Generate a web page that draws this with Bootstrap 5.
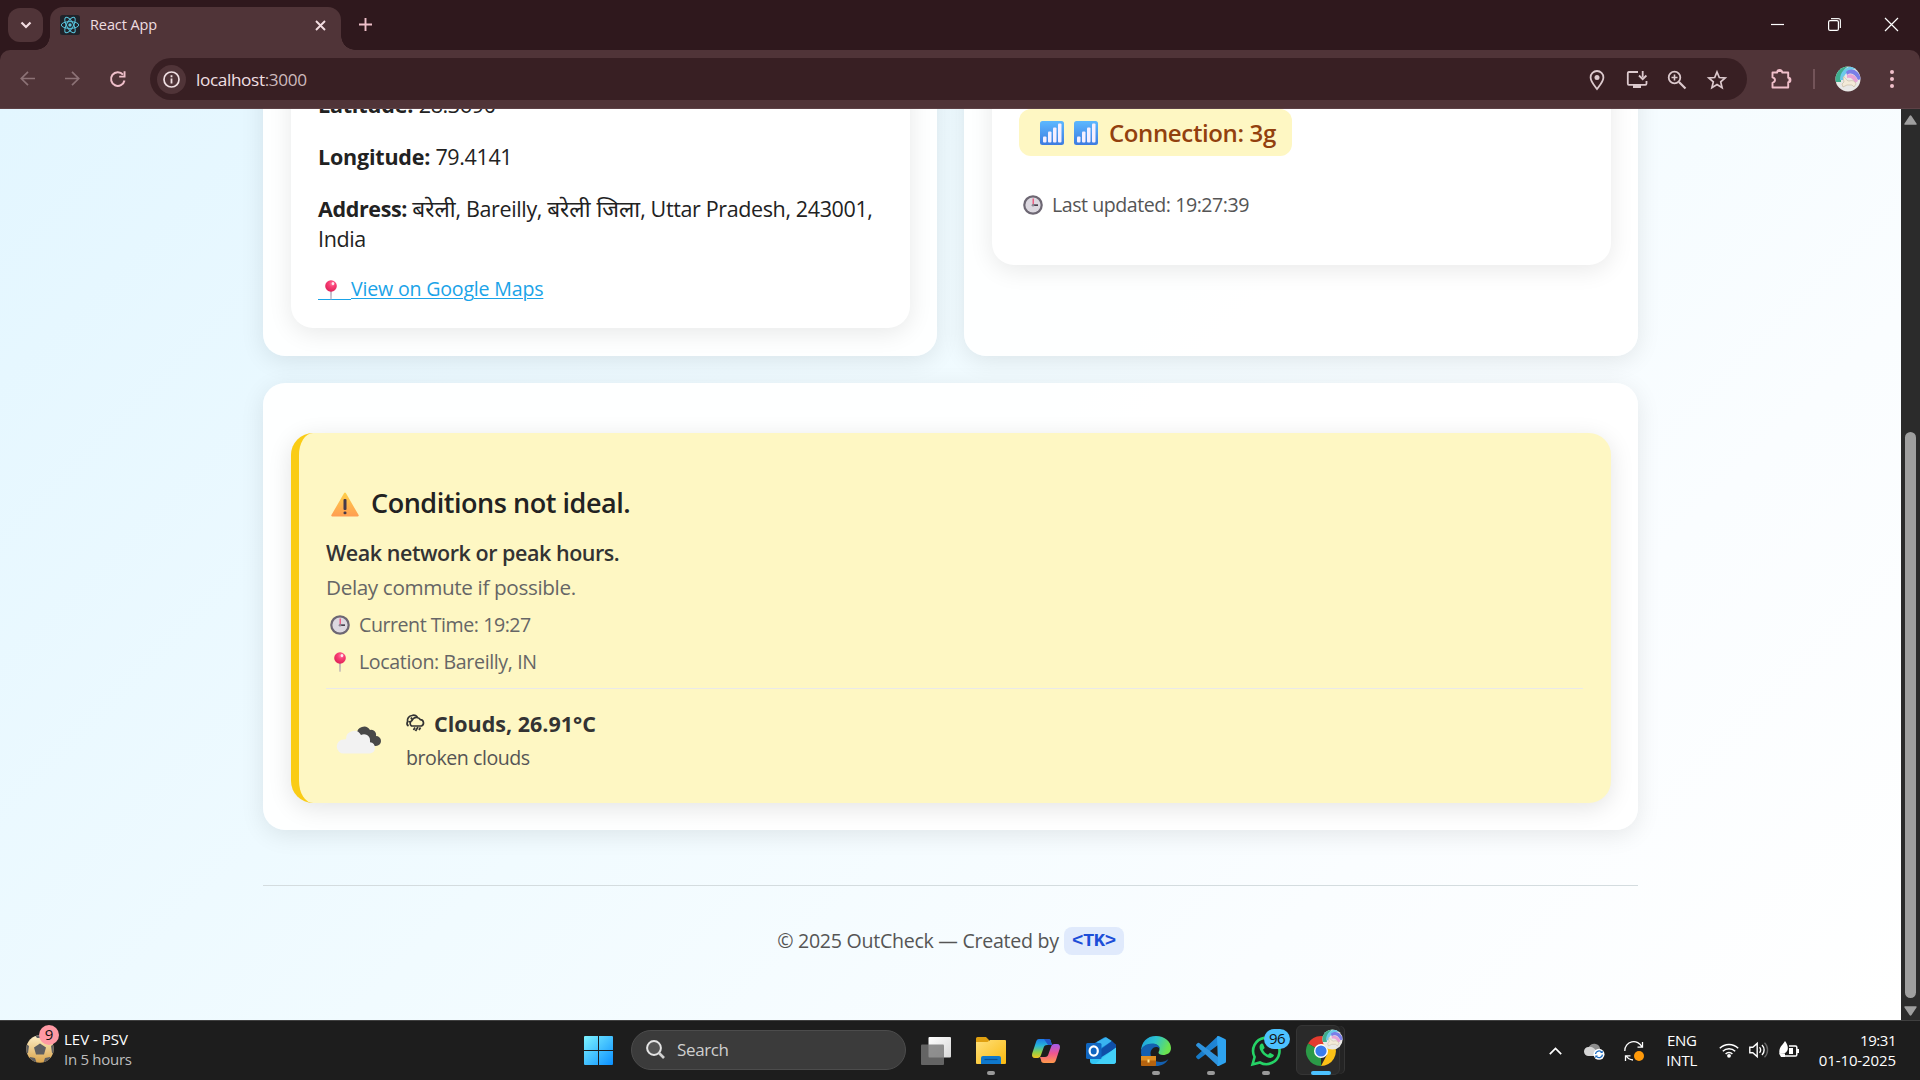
<!DOCTYPE html>
<html lang="en">
<head>
<meta charset="utf-8">
<title>React App</title>
<link href="https://cdn.jsdelivr.net/npm/bootstrap@5.3.0/dist/css/bootstrap.min.css" rel="stylesheet">
<style>
body{width:1920px;height:1080px;overflow:hidden;font-family:"Open Sans","Noto Sans",sans-serif;color:#222;background:#1d1d1d}
svg{display:block;flex:none;overflow:visible}
.t{white-space:nowrap}
.s1{letter-spacing:-.1px}.s2{letter-spacing:-.2px}.s3{letter-spacing:-.28px}.s4{letter-spacing:-.37px}.s5{letter-spacing:-.46px}
.hi{font-size:22.6px;letter-spacing:0;line-height:1}
.tabstrip{height:50px;background:#2f181d}
.tab-menu{width:35px;height:34px;margin:8px 0 0 8px;border-radius:12px;background:#503438}
.tab-item{width:291px;height:43px;margin:7px 0 0 7px;padding:0 15px 7px 10px;border-radius:13px 13px 0 0;background:#503438;color:#eedde0;font-size:14.5px}
.tab-item::before,.tab-item::after{content:"";position:absolute;bottom:0;width:14px;height:14px}
.tab-item::before{left:-14px;background:radial-gradient(circle at 0 0,transparent 13.5px,#503438 14px)}
.tab-item::after{right:-14px;background:radial-gradient(circle at 100% 0,transparent 13.5px,#503438 14px)}
.toolbar{height:59px;background:#503438;border-bottom:1px solid #5d4146;border-radius:10px 10px 0 0}
.top-shell{background:#2f181d}
.omnibox{width:1597px;height:42px;border-radius:21px;background:#381f23;color:#f0dfe2;font-size:17.2px;padding-left:7px;padding-right:20px}
.info-dot{width:29px;height:29px;border-radius:50%;background:#503438}
.viewport{height:911px}
.page{width:1901px;overflow:hidden;background:linear-gradient(135deg,#e3f6ff 0%,#f1fbff 45%,#fafdff 75%,#fff 100%)}
.sheet{width:1375px;margin:-68px auto 0}
.panel{background:rgba(255,255,255,.93);border-radius:22px;box-shadow:0 5px 25px rgba(0,0,0,.09)}
.panel-top{width:674px;height:315px;padding:28px 27px 28px 28px}
.inner{background:#fff;border-radius:22px;box-shadow:0 5px 25px rgba(0,0,0,.09)}
.inner-loc{height:259px;padding:21px 27px 25px}
.inner-net{height:196px;padding:40px 27px}
.l22{font-size:21.5px;line-height:30px}
.l20{font-size:19.6px;line-height:28px}
.maps,.maps:hover{color:#1aa3e8;text-decoration:none}
.maps .t{text-decoration:underline;text-decoration-thickness:1px;text-underline-offset:2px}
.pin-cell{width:33px;height:28px;padding:5px 0 0 3px;background:linear-gradient(#1aa3e8,#1aa3e8) 0 24px/100% 1px no-repeat}
.conn{width:273px;height:47px;border-radius:12px;background:#fef7c3;color:#92400e;font-size:24px;font-weight:600;padding-left:21px}
.grey5{color:#555}.grey6{color:#666}
.panel-wide{margin-top:27px;height:447px;padding:50px 27px 27px 28px}
.advice{height:370px;background:#fef7c3;border-left:8px solid #facc15;border-radius:22px;box-shadow:0 5px 25px rgba(0,0,0,.11);padding:51px 28px 0 27px}
.adv-title{font-size:27px;line-height:38px;font-weight:600}
.adv-line{height:1px;background:#eaeaea;margin-top:12px}
.foot{margin-top:55px;border-top:1px solid #d4dcdf;padding-top:41px}
.tk{width:60px;height:28px;border-radius:8px;background:#e0eafc;color:#1d4ed8;font:700 19px/29px "Liberation Mono",monospace;letter-spacing:-.5px}
.scroll{width:19px;background:#2b2b2b}
.thumb{width:11px;height:566px;border-radius:6px;background:#9f9f9f}
.taskbar{height:60px;background:#1d1d1d;border-top:1px solid #404040;color:#fff;font-size:15px}
.tl{line-height:20px;padding-bottom:2px}
.slot{width:55px;height:59px}
.slot.run::after{content:"";position:absolute;left:23.5px;bottom:5px;width:8px;height:4px;border-radius:2px;background:#9a9a9a}
.slot.on::after{content:"";position:absolute;left:18px;bottom:5px;width:20px;height:4px;border-radius:2px;background:#4cc2ff}
.plate{position:absolute;left:3px;top:4px;width:44px;height:50px;border-radius:6px;background:#2a2a2a;border:1px solid #353535;box-shadow:5px 0 0 -1px #242424,6px 0 0 -1px #353535}
.searchbox{width:275px;height:40px;border-radius:20px;background:#3b3b3b;border:1px solid #4c4c4c;color:#cfcfcf;font-size:17px;padding-left:14px}
.count{position:absolute;border-radius:10px;color:#111;text-align:center;height:20px;line-height:19px;font-size:15px}
.c9{left:39px;top:-4px;width:20px;background:#ff99a4}
.c96{left:26px;top:8px;width:26px;background:#4cc2ff;letter-spacing:-.6px}
.face{position:absolute;left:29px;top:8px}
</style>
</head>
<body>
<svg width="0" height="0" class="position-absolute">
<defs>
<radialGradient id="gPin" cx=".6" cy=".3" r=".8"><stop offset="0" stop-color="#ff7fa6"/><stop offset=".35" stop-color="#f93f75"/><stop offset="1" stop-color="#d81b52"/></radialGradient>
<linearGradient id="gSig" x1="0" y1="0" x2="0" y2="1"><stop offset="0" stop-color="#5cb8ff"/><stop offset="1" stop-color="#3d7be0"/></linearGradient>
<linearGradient id="gWarn" x1="0" y1="0" x2="0" y2="1"><stop offset="0" stop-color="#ffcf4a"/><stop offset="1" stop-color="#ff9d52"/></linearGradient>
<linearGradient id="gWin" gradientUnits="userSpaceOnUse" x1="0" y1="0" x2="29" y2="29"><stop offset="0" stop-color="#7df3ff"/><stop offset="1" stop-color="#0a8fff"/></linearGradient>
<linearGradient id="gFold" x1="0" y1="0" x2="1" y2="1"><stop offset="0" stop-color="#ffe07a"/><stop offset="1" stop-color="#f9b90f"/></linearGradient>
<linearGradient id="gCa" x1="0" y1="0" x2="0" y2="1"><stop offset="0" stop-color="#1c7be8"/><stop offset=".35" stop-color="#27b5d8"/><stop offset=".7" stop-color="#8fd04a"/><stop offset="1" stop-color="#f2c320"/></linearGradient>
<linearGradient id="gCb" x1="0" y1="0" x2="0" y2="1"><stop offset="0" stop-color="#a05bf0"/><stop offset=".5" stop-color="#f0568f"/><stop offset="1" stop-color="#ff9a4a"/></linearGradient>
<linearGradient id="gEd" x1="0" y1="0" x2="1" y2=".3"><stop offset="0" stop-color="#1c9de0"/><stop offset=".5" stop-color="#2cc3d0"/><stop offset="1" stop-color="#6be34e"/></linearGradient>
<linearGradient id="gVs" x1="0" y1="0" x2="1" y2="0"><stop offset="0" stop-color="#1478c4"/><stop offset="1" stop-color="#2187d8"/></linearGradient>
<linearGradient id="gBall" x1="0" y1="0" x2="0" y2="1"><stop offset="0" stop-color="#fff0c8"/><stop offset="1" stop-color="#d8a24a"/></linearGradient>
<linearGradient id="gTv" x1="0" y1="0" x2="1" y2="1"><stop offset="0" stop-color="#fff"/><stop offset="1" stop-color="#d8d8d8"/></linearGradient>
<symbol id="pin" viewBox="0 0 20 20"><path d="M9.300 10h1.400l-.2 9.700h-1z" fill="#a89bb0"/><circle cx="10" cy="6" r="5.800" fill="url(#gPin)"/><ellipse cx="12" cy="3.600" rx="1.300" ry="1.600" fill="#fff" opacity=".85"/></symbol>
<symbol id="clock" viewBox="0 0 20 20"><circle cx="10" cy="10" r="9.800" fill="#6d6773"/><circle cx="10" cy="10" r="7.600" fill="#dcd8e0"/><path d="M9.600 3.500h1.200V10H9.600z" fill="#f0436f"/><path d="M10 9.400h5v1.500h-5z" fill="#38303f"/><circle cx="10" cy="10.200" r="1.300" fill="#8d8794"/></symbol>
<symbol id="signal" viewBox="0 0 24 24"><rect width="24" height="24" rx="2.500" fill="url(#gSig)"/><rect x="3" y="15.500" width="3.500" height="6" rx="1" fill="#f5efff"/><rect x="8" y="10.500" width="3.500" height="11" rx="1" fill="#f5efff"/><rect x="13" y="6.500" width="3.500" height="15" rx="1" fill="#f5efff"/><rect x="18" y="2.500" width="3.500" height="19" rx="1" fill="#f5efff"/></symbol>
<symbol id="face" viewBox="0 0 26 26"><clipPath id="cf"><circle cx="13" cy="13" r="12.500"/></clipPath><g clip-path="url(#cf)"><rect width="26" height="26" fill="#e9e8e6"/><path d="M0 16V0h14C8 3 6 9 6 16z" fill="#3fae8e"/><path d="M5 14C5 6 10 1 18 0l3 3C13 4 9 8 8 14z" fill="#6cc9ea"/><path d="M11 6C16 1 24 4 26 13l-3 1C20 8 16 6 12 9z" fill="#7a7fe8"/><path d="M12 9c5-2 9 1 11 6l-3 2c-2-4-4-6-8-5z" fill="#e7a3d6"/><path d="M8 11c2-1 3 4 6 4 4-1 6 0 7 3l-2 3-2-2-5 0-4 2-1-3 2-2z" fill="#f3ead8" stroke="#c5b59e" stroke-width=".6"/></g></symbol>
</defs>
</svg>

<header class="top-shell">
  <div class="tabstrip d-flex">
    <div class="tab-menu d-flex align-items-center justify-content-center"><svg width="12" height="8" viewBox="0 0 12 8"><path d="M1.500 1.500 6 6l4.500-4.500" fill="none" stroke="#f3dde1" stroke-width="2.200"/></svg></div>
    <div class="tab-item d-flex align-items-center position-relative">
      <svg width="20" height="20" viewBox="0 0 20 20" style="margin-right:10px"><rect width="20" height="20" rx="2.500" fill="#20232a"/><g fill="none" stroke="#58c4dc" stroke-width="1"><ellipse cx="10" cy="10" rx="8.700" ry="3.400"/><ellipse cx="10" cy="10" rx="8.700" ry="3.400" transform="rotate(60 10 10)"/><ellipse cx="10" cy="10" rx="8.700" ry="3.400" transform="rotate(120 10 10)"/></g><circle cx="10" cy="10" r="1.700" fill="#58c4dc"/></svg>
      <span class="t s1 me-auto">React App</span>
      <svg width="11" height="11" viewBox="0 0 11 11"><path d="m1 1 9 9M10 1l-9 9" stroke="#f3dde1" stroke-width="1.900"/></svg>
    </div>
    <svg width="13" height="13" viewBox="0 0 13 13" style="margin:18px 0 0 18px"><path d="M6.500 0v13M0 6.500h13" stroke="#efc0ca" stroke-width="1.900"/></svg>
    <div class="ms-auto d-flex" style="padding:18px 22px 0 0;gap:44px">
      <svg width="13" height="13" viewBox="0 0 13 13"><path d="M0 6.500h13" stroke="#fff" stroke-width="1.200"/></svg>
      <svg width="13" height="13" viewBox="0 0 13 13"><path d="M3 .6h7.400a2 2 0 0 1 2 2V10" fill="none" stroke="#eee" stroke-width="1.200"/><rect x=".6" y="2.600" width="9.800" height="9.800" rx="1.500" fill="none" stroke="#fff" stroke-width="1.200"/></svg>
      <svg width="13" height="13" viewBox="0 0 13 13"><path d="m0 0 13 13M13 0 0 13" stroke="#fff" stroke-width="1.200"/></svg>
    </div>
  </div>
  <div class="toolbar d-flex align-items-center">
    <div class="d-flex" style="width:150px;padding-left:20px;gap:30px">
      <svg width="15" height="15" viewBox="0 0 15 15"><path d="M15 7.500H1.500M8 .8 1.300 7.500 8 14.200" fill="none" stroke="#8c7276" stroke-width="1.700"/></svg>
      <svg width="15" height="15" viewBox="0 0 15 15"><path d="M0 7.500h13.500M7 .8l6.700 6.700L7 14.200" fill="none" stroke="#8c7276" stroke-width="1.700"/></svg>
      <svg width="16" height="16" viewBox="0 0 16 16"><path d="M14.500 9.500A6.800 6.800 0 1 1 13 3.600" fill="none" stroke="#f0bfca" stroke-width="2"/><path d="M15.500.3v6.200H9.200V4.700h4.400V.3z" fill="#f0bfca"/></svg>
    </div>
    <div class="omnibox d-flex align-items-center">
      <div class="info-dot d-flex align-items-center justify-content-center"><svg width="17" height="17" viewBox="0 0 17 17"><circle cx="8.500" cy="8.500" r="7.500" fill="none" stroke="#f0dfe2" stroke-width="1.700"/><path d="M8.500 7.500v5M8.500 4.300v1.900" stroke="#f0dfe2" stroke-width="1.800"/></svg></div>
      <span class="t s4" style="margin-left:10px;padding-top:1px">localhost<span style="color:#cdb9bc">:3000</span></span>
      <div class="ms-auto d-flex align-items-center" style="gap:20px;color:#dcc9cd;padding-top:2px">
        <svg width="20" height="20" viewBox="0 0 20 20"><path d="M10 1a6.400 6.400 0 0 0-6.400 6.500C3.600 11.500 7 15 10 19c3-4 6.400-7.500 6.400-11.500A6.400 6.400 0 0 0 10 1z" fill="none" stroke="currentColor" stroke-width="1.800"/><circle cx="10" cy="7.500" r="2.500" fill="currentColor"/></svg>
        <svg width="20" height="20" viewBox="0 0 20 20"><path d="M11 2H1.800A1.200 1.200 0 0 0 .8 3.300v10.200c0 .8.300 1.300 1 1.300h16.600c.8 0 1.100-.5 1.100-1.300V11" fill="none" stroke="currentColor" stroke-width="1.800"/><path d="M6 15h8v3H6zM14.800 1h1.800v6.500h-1.800z" fill="currentColor"/><path d="m12 5.500 3.700 3.700 3.700-3.700" fill="none" stroke="currentColor" stroke-width="1.800"/></svg>
        <svg width="20" height="20" viewBox="0 0 20 20"><circle cx="7.500" cy="7.500" r="5.800" fill="none" stroke="currentColor" stroke-width="1.800"/><path d="m12 12 6.500 6.500" stroke="currentColor" stroke-width="2.200"/><path d="M7.500 4.500v6M4.500 7.500h6" stroke="currentColor" stroke-width="1.600"/></svg>
        <svg width="20" height="20" viewBox="0 0 20 20"><path d="m10 2 2.300 5.500 5.900.5-4.500 3.900 1.400 5.800-5.100-3.100-5.100 3.100 1.400-5.800L1.800 8l5.900-.5z" fill="none" stroke="currentColor" stroke-width="1.700"/></svg>
      </div>
    </div>
    <svg width="22" height="22" viewBox="0 0 22 22" style="margin-left:23px"><path d="M2.500 4.500h4.700a2.500 2.500 0 0 1 5 0h6v5.200a2.200 2.200 0 0 1 0 4.500v5.300H2.500v-4.700c3.300-.9 3.300-4.500 0-5.400z" fill="none" stroke="#f0bfca" stroke-width="1.900" stroke-linejoin="round"/><path d="M7.400 4a2.300 2.300 0 0 1 4.600 0zM18.500 9.700a2.200 2.200 0 0 1 0 4.500z" fill="#f0bfca"/></svg>
    <div style="width:2px;height:20px;background:#735459;margin-left:21px"></div>
    <svg width="26" height="26" style="margin-left:20px"><use href="#face"/></svg>
    <svg width="4" height="20" viewBox="0 0 4 20" style="margin-left:29px"><g fill="#f0bfca"><circle cx="2" cy="3" r="2"/><circle cx="2" cy="10" r="2"/><circle cx="2" cy="17" r="2"/></g></svg>
  </div>
</header>

<div class="viewport d-flex">
<main class="page">
  <div class="sheet">
    <div class="d-flex justify-content-between">
      <section class="panel panel-top">
        <div class="inner inner-loc">
          <p class="l22 t" style="margin-bottom:22px"><strong class="s2">Latitude:</strong> <span class="s4">28.3690</span></p>
          <p class="l22 t" style="margin-bottom:22px"><strong class="s2">Longitude:</strong><span class="s4"> 79.4141</span></p>
          <p class="l22 t s4" style="margin-bottom:21px"><strong>Address:</strong> <span class="hi">बरेली</span>, Bareilly, <span class="hi">बरेली जिला</span>, Uttar Pradesh, 243001,<br>India</p>
          <a class="maps l20 d-flex align-items-center" href="#"><span class="pin-cell"><svg width="20" height="20"><use href="#pin"/></svg></span><span class="t s2">View on Google Maps</span></a>
        </div>
      </section>
      <section class="panel panel-top">
        <div class="inner inner-net">
          <div class="conn d-flex align-items-center"><svg width="24" height="24"><use href="#signal"/></svg><svg width="24" height="24" style="margin:0 11px 0 10px"><use href="#signal"/></svg><span class="t s4">Connection: 3g</span></div>
          <div class="l20 grey5 d-flex align-items-center" style="margin-top:35px;padding-left:4px"><svg width="20" height="20" style="margin-right:9px"><use href="#clock"/></svg><span class="t s5">Last updated: 19:27:39</span></div>
        </div>
      </section>
    </div>
    <section class="panel panel-wide">
      <div class="advice">
        <div class="adv-title d-flex align-items-center"><svg width="28" height="25" viewBox="0 0 28 25" style="margin:3px 12px 0 5px"><path d="M13 1.300a1.200 1.200 0 0 1 2 0l12.600 21.800a1 1 0 0 1-.9 1.500H1.300a1 1 0 0 1-.9-1.500z" fill="url(#gWarn)"/><rect x="12.500" y="7" width="3" height="11" rx="1" fill="#45394a"/><rect x="12.500" y="19.500" width="3" height="2.700" rx="1.300" fill="#45394a"/></svg><span class="t s5">Conditions not ideal.</span></div>
        <div class="l22 fw-semibold" style="margin-top:16px;color:#333"><span class="t s5">Weak network or peak hours.</span></div>
        <div class="grey6" style="margin-top:4px;font-size:20.700px;line-height:30px"><span class="t s4">Delay commute if possible.</span></div>
        <div class="l20 grey6 d-flex align-items-center" style="margin-top:9px;padding-left:4px"><svg width="20" height="20" style="margin-right:9px"><use href="#clock"/></svg><span class="t s5">Current Time: 19:27</span></div>
        <div class="l20 grey6 d-flex align-items-center" style="margin-top:9px;padding-left:4px"><svg width="20" height="20" style="margin-right:9px"><use href="#pin"/></svg><span class="t s4">Location: Bareilly, IN</span></div>
        <div class="adv-line"></div>
        <div class="d-flex" style="padding-top:20px">
          <svg width="46" height="29" viewBox="0 0 46 29" style="margin:16px 23px 0 11px"><path d="M20 9a7 7 0 0 1 13-4 5 5 0 0 1 6 6 5 5 0 1 1 0 10H28z" fill="#484848"/><path d="M7 28.500a7 7 0 0 1-.5-14 6 6 0 0 1 2.500-.3A8 8 0 0 1 24 10a6 6 0 0 1 9 5.200v2a5.700 5.700 0 0 1 0 11.300z" fill="#f2f2f2"/></svg>
          <div>
            <div class="l22 d-flex"><svg width="20" height="18" viewBox="0 0 20 18" style="margin:5px 8px 0 0"><g fill="none" stroke="#333" stroke-width="1.700"><path d="M5.500 12A3.200 3.200 0 0 1 6 6.500a4.800 4.800 0 0 1 8.500-.8A3.300 3.300 0 0 1 15.500 12z"/><path d="M2.500 12C1 11 .8 9 1.500 7.500 1 4.500 3 2 6 1.500 8.500.5 10.500 2 11.500 3M5 3.500l1 2M2.500 7.500l2 .5"/><path d="M9 13.500 7.500 16M12 13l-2.500 4M14.500 13.500 13 16"/></g></svg><strong class="t" style="color:#333">Clouds, 26.91°C</strong></div>
            <div class="l20 grey5" style="margin-top:5px"><span class="t s5">broken clouds</span></div>
          </div>
        </div>
      </div>
    </section>
    <footer class="foot d-flex justify-content-center l20 grey5">
      <span class="t s3">© 2025 OutCheck — Created by</span>
      <span class="tk text-center" style="margin-left:5px">&lt;TK&gt;</span>
    </footer>
  </div>
</main>
<aside class="scroll d-flex flex-column align-items-center">
  <svg width="13" height="10" viewBox="0 0 13 10" style="margin-top:6px"><path d="M5.500 1a1.200 1.200 0 0 1 2 0l5 7.500a.8.800 0 0 1-.7 1.300H1.200a.8.800 0 0 1-.7-1.300z" fill="#9f9f9f"/></svg>
  <div class="thumb" style="margin-top:307px"></div>
  <svg width="13" height="10" viewBox="0 0 13 10" style="margin-top:8px"><path d="M5.500 9a1.200 1.200 0 0 0 2 0l5-7.500a.8.800 0 0 0-.7-1.300H1.200a.8.800 0 0 0-.7 1.300z" fill="#9f9f9f"/></svg>
</aside>
</div>

<nav class="taskbar d-flex align-items-center">
  <div class="d-flex align-items-center position-relative" style="width:571px;padding-left:26px">
    <svg width="28" height="28" viewBox="0 0 28 28" style="margin:0 10px 3px 0"><clipPath id="cb"><circle cx="14" cy="14" r="13.700"/></clipPath><g clip-path="url(#cb)"><rect width="28" height="28" fill="url(#gBall)"/><g fill="#5d5d60"><path d="m14 8.500 6 4-2 7h-8l-2-7zM-1 8l4 3-1 7-4 2zM8-1h11l-3 4h-5zM29 8l-4 3 1 7 4 2zM4 22l5 1 2 6H4zM24 22l-5 1-2 6h7z"/></g></g></svg>
    <span class="count c9">9</span>
    <div class="tl" style="padding-bottom:4px"><div><span class="t">LEV - PSV</span></div><div style="color:#bdbdbd"><span class="t s3">In 5 hours</span></div></div>
  </div>
  <div class="slot position-relative d-flex align-items-center justify-content-center"><svg width="29" height="29" viewBox="0 0 29 29"><path d="M1 0h13v14H0V1a1 1 0 0 1 1-1zM15 0h13a1 1 0 0 1 1 1v13H15zM0 15h14v14H1a1 1 0 0 1-1-1zM15 15h14v13a1 1 0 0 1-1 1H15z" fill="url(#gWin)"/></svg></div>
  <div class="searchbox d-flex align-items-center" style="margin:0 2px 2px 5px"><svg width="19" height="19" viewBox="0 0 19 19" style="margin-right:12px"><circle cx="8" cy="8" r="6.900" fill="#555" stroke="#e4e4e4" stroke-width="2"/><path d="m13 13 5 5" stroke="#d0d0d0" stroke-width="2.600"/></svg><span class="t s4">Search</span></div>
  <div class="slot d-flex align-items-center justify-content-center"><svg width="30" height="28" viewBox="0 0 30 28"><rect x="7.500" y="0" width="22.500" height="20.500" rx="1" fill="url(#gTv)"/><rect x="0" y="7.500" width="23" height="20.500" rx="1" fill="#777" opacity=".8"/></svg></div>
  <div class="slot run position-relative d-flex align-items-center justify-content-center"><svg width="30" height="27" viewBox="0 0 30 27"><path d="M0 1.500A1.500 1.500 0 0 1 1.500 0H10l3 3v6H0z" fill="#e0a010"/><path d="M0 5h11.500L14 3h15a1 1 0 0 1 1 1v22a1 1 0 0 1-1 1H1a1 1 0 0 1-1-1z" fill="url(#gFold)"/><path d="M5 27v-6a2 2 0 0 1 2-2h16a2 2 0 0 1 2 2v6z" fill="#0f78cc"/><path d="M8.500 22.500h13" stroke="#0a4f92" stroke-width="1.200"/></svg></div>
  <div class="slot d-flex align-items-center justify-content-center"><svg width="28" height="26" viewBox="0 0 28 26"><path d="M7 1h9a3 3 0 0 1 3 3l1 3h-5c-2 0-3 1-3.500 3L9 17c-.6 2-1.600 3-3.500 3H3c-2.500 0-3.500-2-2.800-4.500L4 4c.6-2 1.400-3 3-3z" fill="url(#gCa)"/><path d="M21 25h-9a3 3 0 0 1-3-3l-1-3h5c2 0 3-1 3.500-3L19 9c.6-2 1.600-3 3.500-3H25c2.500 0 3.500 2 2.800 4.500L24 22c-.6 2-1.400 3-3 3z" fill="url(#gCb)"/><path d="M12 1h4a3 3 0 0 1 3 3l1 3h-4z" fill="#2157c8"/></svg></div>
  <div class="slot d-flex align-items-center justify-content-center"><svg width="30" height="27" viewBox="0 0 30 27"><path d="M4 9 18 .5q1-.6 2 0L30 8v4H4z" fill="#1a86d8"/><path d="M11 5l9-4.700L26 4 15 11z" fill="#39b4f0"/><path d="M30 9v15a3 3 0 0 1-3 3H7a3 3 0 0 1-3-3V18l14-2z" fill="#31c5f4"/><path d="M26 4l4 4v3L14 21l-3-6z" fill="#0f4fa8"/><path d="M30 10.500V24a3 3 0 0 1-3 3H9z" fill="#42d0f8"/><rect x="0" y="6" width="15.500" height="16" rx="1.500" fill="#1066c0"/><ellipse cx="7.700" cy="14" rx="4.100" ry="4.600" fill="none" stroke="#fff" stroke-width="2.200"/></svg></div>
  <div class="slot run position-relative d-flex align-items-center justify-content-center"><svg width="30" height="30" viewBox="0 0 30 30"><path d="M0 16C0 6 6 0 15 0c9 0 15 6 15 12 0 5-4 7-8 7-3 0-4.500-1.200-4.500-2.500 0-1 1-1.500 1-3.500 0-3-3-5-6.500-5C6 8 0 11 0 16z" fill="url(#gEd)"/><path d="M0 16c0-5 5-8.500 11-8.500 5 0 8 2.500 8 5.500-1-1.500-2.500-2-4-2-3 0-5.500 3-5.500 6.500 0 5 5 8.500 10 8.500 3 0 6-1.200 8-3-2.500 4.500-7 7-12.500 7C6.500 30 0 24 0 16z" fill="#1460b0"/><rect x="0" y="20" width="15" height="10" rx=".8" fill="#b5630f"/><rect x="0" y="20" width="15" height="4.500" fill="#e08f22"/><rect x="6.500" y="23.500" width="2" height="3" fill="#ffe28a"/></svg></div>
  <div class="slot run position-relative d-flex align-items-center justify-content-center"><svg width="30" height="30" viewBox="0 0 30 30"><path d="M22 0v9L3.200 23q-.8.500-1.500 0L.4 21.700q-.8-.8 0-1.600z" fill="url(#gVs)"/><path d="M22 30v-9L3.200 7q-.8-.5-1.500 0L.4 8.300q-.8.800 0 1.600z" fill="#2f93dd"/><path d="M21 .6Q22-.4 23.300.3l5.700 2.800a1.700 1.700 0 0 1 1 1.500v20.800a1.700 1.700 0 0 1-1 1.500l-5.700 2.800q-1.300.7-2.300-.3l1-1z" fill="#2ea3f0"/></svg></div>
  <div class="slot run position-relative d-flex align-items-center justify-content-center"><svg width="30" height="30" viewBox="0 0 30 30"><path d="M1.500 28.500 3.600 21A13.200 13.200 0 1 1 9 26.500z" fill="none" stroke="#25d366" stroke-width="2.600"/><path d="M10.500 7.500c-1 .3-2 1.600-2 3.400 0 5 6.500 11 11 11 2 0 3.300-1.200 3.500-2.800l-4-2.300-2 1.900c-2.300-1-4-2.800-5-5l1.700-1.700-1.700-4.300z" fill="#25d366"/></svg><span class="count c96">96</span></div>
  <div class="slot on position-relative d-flex align-items-center justify-content-center"><div class="plate"></div><svg width="30" height="30" viewBox="0 0 30 30" class="position-relative"><path d="M15 15 2 7.500A15 15 0 0 1 28 7.500z" fill="#e33b2e"/><path d="M15 15v15A15 15 0 0 1 2 7.500z" fill="#2b9a47"/><path d="M15 8h13.200A15 15 0 0 1 15 30l6-11.500z" fill="#fbc116"/><circle cx="15" cy="15" r="7" fill="#fff"/><circle cx="15" cy="15" r="5.600" fill="#3a7cec"/></svg><svg class="face" width="21" height="21"><use href="#face"/></svg></div>

  <div class="ms-auto d-flex align-items-center" style="padding-right:24px">
    <svg width="13" height="8" viewBox="0 0 13 8" style="margin-right:22px"><path d="M.8 7.200 6.500 1.500l5.700 5.700" fill="none" stroke="#fff" stroke-width="1.700"/></svg>
    <svg width="21" height="18" viewBox="0 0 21 18" style="margin-right:19px"><path d="M5 5a6 6 0 0 1 11 1v5H5z" fill="#8d8d8d"/><path d="M4.500 14a4.500 4.500 0 0 1 0-9C8 4 12 7 14 12v2z" fill="#d5d5d5"/><circle cx="15" cy="12.300" r="5.500" fill="#fff"/><path d="M11.500 12a3.500 3.500 0 0 1 6.300-1.600M18.500 12.600a3.500 3.500 0 0 1-6.300 1.600" fill="none" stroke="#1668c0" stroke-width="1.300"/><path d="M18.700 8.500v2.600h-2.600zM11.300 16.200v-2.600h2.600z" fill="#1668c0"/></svg>
    <svg width="20" height="20" viewBox="0 0 20 20" style="margin-right:22px"><path d="M.8 10A9 9 0 0 1 18 6M18.500 1v5.200h-5M9 19A9 9 0 0 1 2 14.500M1.500 20v-5.200h5" fill="none" stroke="#fff" stroke-width="1.300"/><circle cx="15" cy="15" r="5" fill="#ff9a0a"/></svg>
    <div class="tl text-center" style="width:32px"><div><span class="t s4">ENG</span></div><div><span class="t s1">INTL</span></div></div>
    <svg width="20" height="16" viewBox="0 0 20 16" style="margin:0 10px 2px 21px"><g fill="none" stroke="#fff" stroke-width="1.500"><path d="M.8 6.200a13 13 0 0 1 18.400 0M3.800 9.200a8.800 8.800 0 0 1 12.400 0M6.600 12a4.800 4.800 0 0 1 6.800 0"/></g><circle cx="10" cy="13.800" r="1.900" fill="#fff"/></svg>
    <svg width="20" height="16" viewBox="0 0 20 16" style="margin:0 10px 2px 0"><path d="M.8 5.300h3L8.200 1.400v13.200L3.800 10.700h-3z" fill="none" stroke="#fff" stroke-width="1.400"/><path d="M10.500 5.300a3.800 3.800 0 0 1 0 5.400M13 3a7 7 0 0 1 0 10" fill="none" stroke="#fff" stroke-width="1.400"/><path d="M15.500.8a10 10 0 0 1 0 14.400" fill="none" stroke="#666" stroke-width="1.400"/></svg>
    <svg width="20" height="17" viewBox="0 0 20 17" style="margin:0 20px 3px 0"><path d="M10 5h6.500a1.300 1.300 0 0 1 1.300 1.300v7.400a1.300 1.300 0 0 1-1.300 1.300H6" fill="none" stroke="#fff" stroke-width="1.500"/><path d="M18 8h2v4h-2zM10 7h4v6h-4z" fill="#fff"/><path d="M.5 13C-.5 6 3 5 6 0c3 4 5 10-1 12.500z" fill="#fff"/><path d="M0 12.500h6V16H2z" fill="#fff"/></svg>
    <div class="tl text-end"><div><span class="t s5">19:31</span></div><div><span class="t s1">01-10-2025</span></div></div>
  </div>
</nav>
<script src="https://cdn.jsdelivr.net/npm/bootstrap@5.3.0/dist/js/bootstrap.bundle.min.js"></script>
</body>
</html>
